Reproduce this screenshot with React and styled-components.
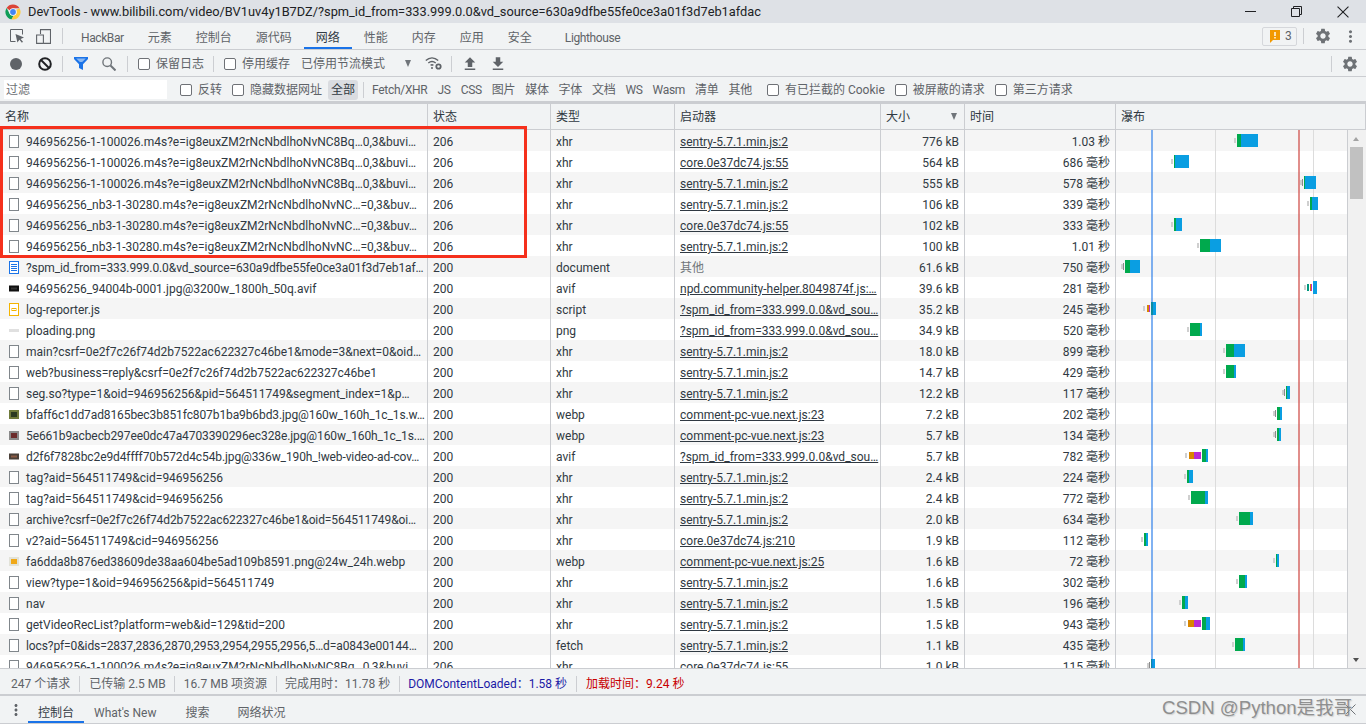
import React from "react";
import styled, { createGlobalStyle } from "styled-components";
import { MdSettings, MdMoreVert, MdFileUpload, MdFileDownload } from "react-icons/md";

const GlobalStyle = createGlobalStyle`
  html, body {
    margin: 0;
    padding: 0;
    background: #fff;
    overflow: hidden;
  }
  * {
    box-sizing: border-box;
  }
  body {
    font-family: Roboto, "Noto Sans CJK SC", sans-serif;
    font-size: 12px;
    line-height: 16px;
    color: #303942;
  }
  svg {
    flex: none;
  }
`;

const COLUMNS = "428px 123px 124px 206px 84px 151px 1fr";
const BORDER = "#cbcdd1";

const Main = styled.div`
  position: relative;
  display: flex;
  flex-direction: column;
  width: 1366px;
  height: 728px;
  overflow: hidden;
`;

const TitleBar = styled.div`
  display: flex;
  align-items: center;
  height: 23px;
  padding-left: 5px;
  background: #dee1e6;
  color: #202124;
  font-size: 12.800px;
  white-space: nowrap;
`;

const TitleText = styled.span`
  margin-left: 7px;
`;

const WindowButtons = styled.div`
  display: flex;
  align-items: center;
  gap: 35px;
  margin-left: auto;
  padding-right: 17px;
  color: #202124;
`;

const Toolbar = styled.div`
  display: flex;
  align-items: center;
  flex: none;
  height: ${p => p.$height || 27}px;
  padding-left: ${p => p.$left || 0}px;
  padding-top: ${p => p.$top || 0}px;
  background: #f1f3f4;
  border-bottom: 1px solid ${BORDER};
  color: #5f6368;
  white-space: nowrap;
`;

const Separator = styled.div`
  flex: none;
  width: 1px;
  height: 16px;
  margin: 0 ${p => p.$right ?? 10}px 0 ${p => p.$left ?? 10}px;
  background: #ccced2;
`;

const Tab = styled.div`
  display: flex;
  align-items: center;
  height: 100%;
  padding: ${p => p.$top ?? 3}px ${p => p.$pad ?? 12}px 0;
  margin-left: ${p => p.$gap || 0}px;
  letter-spacing: ${p => (p.$tight ? "-0.4px" : "0")};
  color: ${p => (p.$active ? "#333b45" : "#5f6368")};
  box-shadow: ${p => (p.$active ? "inset 0 -2px 0 #1a73e8" : "none")};
`;

const IconSlot = styled.span`
  display: flex;
  align-items: center;
  justify-content: center;
  flex: none;
  width: ${p => p.$width}px;
  margin-left: ${p => p.$left || 0}px;
  color: ${p => p.$color || "#5f6368"};
`;

const RightGroup = styled.div`
  display: flex;
  align-items: center;
  margin-left: auto;
`;

const IssueBadge = styled.div`
  display: flex;
  align-items: center;
  gap: 5px;
  width: 35px;
  height: 19px;
  padding-left: 7px;
  border: 1px solid #d5d7db;
  border-radius: 2px;
`;

const CheckLabel = styled.label`
  display: flex;
  align-items: center;
  gap: 6px;
  margin-left: ${p => p.$left || 0}px;
  color: #5f6368;
`;

const CheckBox = styled.input`
  appearance: none;
  flex: none;
  width: 12px;
  height: 12px;
  margin: 0;
  background: #fff;
  border: 1px solid #6e7176;
  border-radius: 2px;
`;

const PlainLabel = styled.span`
  margin-left: ${p => p.$left || 0}px;
`;

const FilterInput = styled.input`
  width: 163px;
  height: 19px;
  margin: 0;
  padding: 0 2px;
  border: none;
  outline: none;
  background: #fff;
  font: inherit;
  &::placeholder {
    color: #6d7074;
    opacity: 1;
  }
`;

const TypeChips = styled.div`
  display: flex;
  align-items: center;
  margin-left: 6px;
`;

const Chip = styled.div`
  display: flex;
  align-items: center;
  height: 20px;
  padding: 0 3px;
  margin-right: ${p => p.$gap ?? 4}px;
  border-radius: 3px;
  letter-spacing: ${p => (p.$active ? "0" : "-0.3px")};
  background: ${p => (p.$active ? "#dadce0" : "transparent")};
  color: ${p => (p.$active ? "#303942" : "#5f6368")};
`;

const HeaderRow = styled.div`
  display: grid;
  grid-template-columns: ${COLUMNS};
  flex: none;
  height: 28px;
  background: #f1f3f4;
  border-top: 2px solid ${BORDER};
  border-bottom: 1px solid ${BORDER};
`;

const HeaderCell = styled.div`
  display: flex;
  align-items: center;
  justify-content: space-between;
  padding: 0 7px 0 5px;
  border-right: 1px solid ${BORDER};
  color: #303942;
`;

const SortArrow = styled.span`
  width: 0;
  height: 0;
  border-left: 3.500px solid transparent;
  border-right: 3.500px solid transparent;
  border-top: 7px solid #70757a;
`;

const Body = styled.div`
  display: flex;
  flex: none;
  height: 539px;
  overflow: hidden;
  border-bottom: 1px solid ${BORDER};
`;

const RowList = styled.div`
  position: relative;
  flex: 1;
  overflow: hidden;
`;

const Row = styled.div`
  display: grid;
  grid-template-columns: ${COLUMNS};
  height: 21px;
  background: ${p => (p.$odd ? "#fff" : "#f5f5f5")};
`;

const Cell = styled.div`
  display: flex;
  align-items: center;
  justify-content: ${p => (p.$right ? "flex-end" : "flex-start")};
  min-width: 0;
  padding: ${p => (p.$right ? "3px 5px 0 0" : "3px 0 0 5px")};
  border-right: 1px solid ${BORDER};
  color: ${p => (p.$muted ? "#70757a" : "#303942")};
  white-space: nowrap;
  overflow: hidden;
`;

const NameCell = styled(Cell)`
  padding-left: 9px;
  svg {
    margin-top: -2px;
  }
`;

const NameText = styled.span`
  margin-left: 7px;
  letter-spacing: ${p => (p.$long ? "-0.1px" : "0")};
`;

const Initiator = styled.span`
  text-decoration: underline;
`;

const WaterfallChart = styled.svg`
  position: absolute;
  top: 0;
  left: 1116px;
  display: block;
`;

const ScrollTrack = styled.div`
  position: relative;
  flex: none;
  width: 18px;
  background: #f1f1f1;
`;

const ScrollThumb = styled.div`
  position: absolute;
  top: 17px;
  left: 2px;
  width: 13px;
  height: 52px;
  background: #c1c1c1;
`;

const ScrollArrow = styled.span`
  position: absolute;
  left: 5px;
  ${p => (p.$up ? "top: 7px" : "bottom: 6px")};
  border-left: 3.500px solid transparent;
  border-right: 3.500px solid transparent;
  ${p => (p.$up ? "border-bottom: 4px solid #a3a3a3" : "border-top: 4px solid #505050")};
`;

const StatusBar = styled.div`
  display: flex;
  align-items: center;
  flex: none;
  height: 27px;
  padding: 5px 0 0 11px;
  background: #f1f3f4;
  border-bottom: 2px solid ${BORDER};
  color: #5f6368;
  white-space: nowrap;
`;

const StatusText = styled.span`
  color: ${p => p.$color || "#5f6368"};
`;

const DrawerBar = styled(Toolbar)`
  height: 28px;
  padding-left: 12px;
`;

const RedFrame = styled.div`
  position: absolute;
  top: 126px;
  left: 0;
  width: 527px;
  height: 132px;
  border: 3px solid #f5301c;
  pointer-events: none;
`;

const Watermark = styled.div`
  position: absolute;
  top: 694px;
  left: 1162px;
  font-family: "Liberation Sans", "Noto Sans CJK SC", sans-serif;
  font-size: 18.600px;
  line-height: 28px;
  color: rgba(120, 120, 120, 0.8);
  text-shadow: 1px 1px 1px rgba(200, 200, 200, 0.8);
  white-space: nowrap;
`;

const ChromeLogo = () => (
  <svg width="16" height="16" viewBox="0 0 16 16">
    <path fill="#db4437" d="M8 .5a7.500 7.500 0 0 1 6.500 3.750H8a3.750 3.750 0 0 0-3.250 1.880L1.600 3.900A7.500 7.500 0 0 1 8 .5z" />
    <path fill="#0f9d58" d="M1.600 3.900l3.150 5.980a3.750 3.750 0 0 0 3.900 1.820L6.600 15.370A7.500 7.500 0 0 1 1.600 3.900z" />
    <path fill="#ffcd40" d="M14.500 4.250A7.500 7.500 0 0 1 6.600 15.370l2.050-3.670a3.750 3.750 0 0 0 2.600-5.600l-.1-.1z" />
    <circle cx="8" cy="8" r="3.600" fill="#fff" />
    <circle cx="8" cy="8" r="2.900" fill="#4285f4" />
  </svg>
);

const MinimizeIcon = () => (
  <svg width="11" height="11" viewBox="0 0 11 11">
    <path d="M0 5.500h11" stroke="currentColor" />
  </svg>
);

const RestoreIcon = () => (
  <svg width="11" height="11" viewBox="0 0 11 11" fill="none" stroke="currentColor">
    <path d="M.5 2.500h8v8h-8z" />
    <path d="M2.500 2.500v-2h8v8h-2" />
  </svg>
);

const CloseIcon = ({ size = 11 }) => (
  <svg width={size} height={size} viewBox="0 0 11 11" stroke="currentColor">
    <path d="M.5.5l10 10M10.500.5l-10 10" />
  </svg>
);

const InspectIcon = () => (
  <svg width="14" height="14" viewBox="0 0 14 14">
    <path fill="none" stroke="#5f6368" d="M5.500 12.500h-5v-12h12v5" />
    <path fill="#5f6368" d="M5.500 5l8.500 3.600-3.400 1.300 2.400 2.800-1.100 1-2.500-2.900L7.400 13.500z" />
  </svg>
);

const DeviceIcon = () => (
  <svg width="15" height="15" viewBox="0 0 15 15" fill="none" stroke="#5f6368" strokeWidth="1.100">
    <path d="M4.500 5V.6h10v13.800H8" />
    <path d="M.6 6h6.800v8.400H.6z" />
  </svg>
);

const RecordIcon = () => (
  <svg width="12" height="12" viewBox="0 0 12 12">
    <circle cx="6" cy="6" r="6" fill="#5f6368" />
  </svg>
);

const ClearIcon = () => (
  <svg width="14" height="14" viewBox="0 0 14 14" fill="none" stroke="#202124" strokeWidth="2">
    <circle cx="7" cy="7" r="5.800" />
    <path d="M3 3l8 8" />
  </svg>
);

const FunnelIcon = () => (
  <svg width="14" height="13" viewBox="0 0 14 13">
    <path fill="#1a73e8" d="M0 0h14v2L9 7.200V13L5 11V7.200L0 2z" />
    <path fill="#8ab8f2" d="M2.200 1.400h9.600L8.200 5H5.800z" />
  </svg>
);

const SearchIcon = () => (
  <svg width="14" height="14" viewBox="0 0 14 14" fill="none" stroke="#70757a" strokeWidth="1.400">
    <circle cx="5.200" cy="5.200" r="4.300" />
    <path strokeWidth="2" d="M8.500 8.500l5 5" />
  </svg>
);

const WifiGearIcon = () => (
  <svg width="17" height="13" viewBox="0 0 17 13" fill="none" stroke="#5f6368" strokeWidth="1.400">
    <path d="M.8 3.500c3.800-3.400 8.600-3.400 12.400 0" />
    <path d="M3.300 6c2.400-2 5-2 7.400 0" />
    <path d="M5.600 8.400c1-.8 1.800-.8 2.800 0" />
    <circle cx="7" cy="11" r="1" fill="#5f6368" stroke="none" />
    <circle cx="13.500" cy="9.500" r="2.200" strokeWidth="1.800" />
  </svg>
);

const FlagIcon = () => (
  <svg width="10" height="13" viewBox="0 0 10 13">
    <path fill="#f29900" d="M0 0h10v10H3l-3 3z" />
    <path fill="#fff" d="M4.300 2h1.400v4H4.300zM4.300 7h1.400v1.400H4.300z" />
  </svg>
);

const FileIcon = () => (
  <svg width="10" height="13" viewBox="0 0 10 13">
    <rect x=".5" y=".5" width="9" height="12" fill="#fff" stroke="#80868b" />
  </svg>
);

const DocIcon = () => (
  <svg width="10" height="13" viewBox="0 0 10 13">
    <rect x=".5" y=".5" width="9" height="12" fill="#fff" stroke="#1a73e8" />
    <path stroke="#1a73e8" d="M2 3.500h6M2 5.500h6M2 7.500h6M2 9.500h6" />
  </svg>
);

const ScriptIcon = () => (
  <svg width="10" height="13" viewBox="0 0 10 13">
    <rect x=".5" y=".5" width="9" height="12" fill="#fff" stroke="#f4b400" />
    <rect x="3" y="5.500" width="4" height="2" fill="none" stroke="#f4b400" />
  </svg>
);

const LineThumb = () => (
  <svg width="10" height="13" viewBox="0 0 10 13">
    <rect y="5" width="10" height="3" fill="#e0e0e0" />
  </svg>
);

const Thumb = ({ colors, height = 9 }) => (
  <svg width="10" height="13" viewBox="0 0 10 13">
    <rect y={(13 - height) / 2} width="10" height={height} fill={colors[0]} />
    <rect x="2" y={(13 - height) / 2 + 2} width="6" height={height - 4} fill={colors[1]} />
  </svg>
);

const rowIcons = {
  file: <FileIcon />,
  doc: <DocIcon />,
  script: <ScriptIcon />,
  line: <LineThumb />,
  black: <Thumb colors={["#111", "#333"]} height={6} />,
  forest: <Thumb colors={["#6f7a3a", "#2b3a20"]} />,
  maroon: <Thumb colors={["#8a8a8a", "#6b2a2a"]} />,
  ad: <Thumb colors={["#4a4038", "#8a5a44"]} height={6} />,
  coin: <Thumb colors={["#e2e2d8", "#f0a818"]} />
};

const M1 = "946956256-1-100026.m4s?e=ig8euxZM2rNcNbdlhoNvNC8Bq…0,3&buvi…";
const M2 = "946956256_nb3-1-30280.m4s?e=ig8euxZM2rNcNbdlhoNvNC…=0,3&buv…";
const SENTRY = "sentry-5.7.1.min.js:2";
const CORE = "core.0e37dc74.js:55";
const SPM = "?spm_id_from=333.999.0.0&vd_sou…";
const COMMENT = "comment-pc-vue.next.js:23";

const requests = [
  ["file", M1, "206", "xhr", SENTRY, "776 kB", "1.03 秒"],
  ["file", M1, "206", "xhr", CORE, "564 kB", "686 毫秒"],
  ["file", M1, "206", "xhr", SENTRY, "555 kB", "578 毫秒"],
  ["file", M2, "206", "xhr", SENTRY, "106 kB", "339 毫秒"],
  ["file", M2, "206", "xhr", CORE, "102 kB", "333 毫秒"],
  ["file", M2, "206", "xhr", SENTRY, "100 kB", "1.01 秒"],
  ["doc", "?spm_id_from=333.999.0.0&vd_source=630a9dfbe55fe0ce3a01f3d7eb1af…", "200", "document", null, "61.6 kB", "750 毫秒"],
  ["black", "946956256_94004b-0001.jpg@3200w_1800h_50q.avif", "200", "avif", "npd.community-helper.8049874f.js:…", "39.6 kB", "281 毫秒"],
  ["script", "log-reporter.js", "200", "script", SPM, "35.2 kB", "245 毫秒"],
  ["line", "ploading.png", "200", "png", SPM, "34.9 kB", "520 毫秒"],
  ["file", "main?csrf=0e2f7c26f74d2b7522ac622327c46be1&mode=3&next=0&oid…", "200", "xhr", SENTRY, "18.0 kB", "899 毫秒"],
  ["file", "web?business=reply&csrf=0e2f7c26f74d2b7522ac622327c46be1", "200", "xhr", SENTRY, "14.7 kB", "429 毫秒"],
  ["file", "seg.so?type=1&oid=946956256&pid=564511749&segment_index=1&p…", "200", "xhr", SENTRY, "12.2 kB", "117 毫秒"],
  ["forest", "bfaff6c1dd7ad8165bec3b851fc807b1ba9b6bd3.jpg@160w_160h_1c_1s.w…", "200", "webp", COMMENT, "7.2 kB", "202 毫秒"],
  ["maroon", "5e661b9acbecb297ee0dc47a4703390296ec328e.jpg@160w_160h_1c_1s.…", "200", "webp", COMMENT, "5.7 kB", "134 毫秒"],
  ["ad", "d2f6f7828bc2e9d4ffff70b572d4c54b.jpg@336w_190h_!web-video-ad-cov…", "200", "avif", SPM, "5.7 kB", "782 毫秒"],
  ["file", "tag?aid=564511749&cid=946956256", "200", "xhr", SENTRY, "2.4 kB", "224 毫秒"],
  ["file", "tag?aid=564511749&cid=946956256", "200", "xhr", SENTRY, "2.4 kB", "772 毫秒"],
  ["file", "archive?csrf=0e2f7c26f74d2b7522ac622327c46be1&oid=564511749&oi…", "200", "xhr", SENTRY, "2.0 kB", "634 毫秒"],
  ["file", "v2?aid=564511749&cid=946956256", "200", "xhr", "core.0e37dc74.js:210", "1.9 kB", "112 毫秒"],
  ["coin", "fa6dda8b876ed38609de38aa604be5ad109b8591.png@24w_24h.webp", "200", "webp", "comment-pc-vue.next.js:25", "1.6 kB", "72 毫秒"],
  ["file", "view?type=1&oid=946956256&pid=564511749", "200", "xhr", SENTRY, "1.6 kB", "302 毫秒"],
  ["file", "nav", "200", "xhr", SENTRY, "1.5 kB", "196 毫秒"],
  ["file", "getVideoRecList?platform=web&id=129&tid=200", "200", "xhr", SENTRY, "1.5 kB", "943 毫秒"],
  ["file", "locs?pf=0&ids=2837,2836,2870,2953,2954,2955,2956,5…d=a0843e00144…", "200", "fetch", SENTRY, "1.1 kB", "435 毫秒"],
  ["file", M1, "206", "xhr", CORE, "1.0 kB", "115 毫秒"]
];

// waterfall segments per row: [kind, from x, to x] in page pixels
const waterfall = [
  [["w", 1234, 1236], ["g", 1237, 1241], ["b", 1241, 1258]],
  [["w", 1171, 1173], ["g", 1174, 1175], ["b", 1175, 1189]],
  [["w", 1300, 1302], ["t", 1302, 1303], ["g", 1304, 1305], ["b", 1305, 1316]],
  [["w", 1307, 1309], ["g", 1310, 1312], ["b", 1312, 1318]],
  [["w", 1171, 1173], ["g", 1174, 1176], ["b", 1176, 1182]],
  [["w", 1197, 1199], ["g", 1200, 1210], ["b", 1210, 1221]],
  [["w", 1121, 1123], ["t", 1123, 1124], ["g", 1125, 1130], ["b", 1130, 1140]],
  [["w", 1304, 1306], ["e", 1307, 1309], ["q", 1310, 1311], ["p", 1311, 1312], ["b", 1313, 1317]],
  [["w", 1143, 1145], ["q", 1147, 1149], ["p", 1149, 1150], ["g", 1151, 1153], ["b", 1153, 1156]],
  [["w", 1187, 1189], ["g", 1190, 1200], ["b", 1200, 1202]],
  [["w", 1223, 1225], ["g", 1226, 1234], ["b", 1234, 1245]],
  [["w", 1223, 1225], ["g", 1226, 1234], ["b", 1234, 1236]],
  [["w", 1282, 1284], ["t", 1284, 1285], ["g", 1286, 1287], ["b", 1287, 1290]],
  [["w", 1273, 1275], ["t", 1275, 1276], ["g", 1277, 1280], ["b", 1280, 1282]],
  [["w", 1273, 1275], ["t", 1275, 1276], ["g", 1277, 1279], ["b", 1279, 1281]],
  [["w", 1185, 1187], ["q", 1189, 1194], ["p", 1194, 1201], ["g", 1202, 1206], ["b", 1206, 1208]],
  [["w", 1184, 1186], ["g", 1187, 1189], ["b", 1189, 1193]],
  [["w", 1188, 1190], ["g", 1191, 1205], ["b", 1205, 1208]],
  [["w", 1236, 1238], ["g", 1239, 1250], ["b", 1250, 1253]],
  [["w", 1141, 1143], ["g", 1144, 1146], ["b", 1146, 1148]],
  [["w", 1273, 1275], ["g", 1276, 1277], ["b", 1277, 1279]],
  [["w", 1236, 1238], ["g", 1239, 1245], ["b", 1245, 1247]],
  [["w", 1179, 1181], ["g", 1182, 1185], ["b", 1185, 1188]],
  [["w", 1184, 1186], ["q", 1188, 1194], ["p", 1194, 1201], ["g", 1202, 1206], ["b", 1206, 1210]],
  [["w", 1232, 1234], ["g", 1235, 1243], ["b", 1243, 1245]],
  [["w", 1147, 1149], ["t", 1149, 1150], ["g", 1151, 1152], ["b", 1152, 1155]]
];

const segmentStyle = {
  w: { fill: "#cfcfcf", top: 4, height: 5 },
  t: { fill: "#8a8a8a", top: 3, height: 7 },
  e: { fill: "#00967d", top: 3, height: 7 },
  q: { fill: "#d98600", top: 3, height: 7 },
  p: { fill: "#b82bd4", top: 3, height: 7 },
  g: { fill: "#00a94d", top: 0, height: 13 },
  b: { fill: "#0a9ee2", top: 0, height: 13 }
};

const Chart = () => (
  <WaterfallChart width="232" height="539" viewBox="1116 130 232 539">
    <path stroke="#dcdcdc" d="M1215.500 130v539M1313.500 130v539" />
    {waterfall.map((segments, row) =>
      segments.map(([kind, from, to]) => (
        <rect
          key={row + kind + from}
          x={from}
          y={134 + 21 * row + segmentStyle[kind].top}
          width={to - from}
          height={segmentStyle[kind].height}
          fill={segmentStyle[kind].fill}
        />
      ))
    )}
    <rect x="1151" y="130" width="2" height="539" fill="#1a73e8" opacity="0.55" />
    <rect x="1298" y="130" width="2" height="539" fill="#c8312b" opacity="0.55" />
  </WaterfallChart>
);

const typeChips = ["Fetch/XHR", "JS", "CSS", "图片", "媒体", "字体", "文档", "WS", "Wasm", "清单", "其他"];

const App = () => (
  <Main>
    <GlobalStyle />
    <TitleBar>
      <ChromeLogo />
      <TitleText>DevTools - www.bilibili.com/video/BV1uv4y1B7DZ/?spm_id_from=333.999.0.0&vd_source=630a9dfbe55fe0ce3a01f3d7eb1afdac</TitleText>
      <WindowButtons>
        <MinimizeIcon />
        <RestoreIcon />
        <CloseIcon size={12} />
      </WindowButtons>
    </TitleBar>

    <Toolbar $left={10}>
      <IconSlot $width={14}><InspectIcon /></IconSlot>
      <IconSlot $width={15} $left={12}><DeviceIcon /></IconSlot>
      <Separator $left={11} $right={6} />
      <Tab $tight>HackBar</Tab>
      <Tab>元素</Tab>
      <Tab>控制台</Tab>
      <Tab>源代码</Tab>
      <Tab $active>网络</Tab>
      <Tab>性能</Tab>
      <Tab>内存</Tab>
      <Tab>应用</Tab>
      <Tab>安全</Tab>
      <Tab $gap={9} $tight>Lighthouse</Tab>
      <RightGroup>
        <IssueBadge><FlagIcon />3</IssueBadge>
        <Separator $left={6} $right={10} />
        <IconSlot $width={17} $color="#6e7276"><MdSettings size={18} /></IconSlot>
        <IconSlot $width={18} $left={10} $color="#6e7276"><MdMoreVert size={19} /></IconSlot>
        <IconSlot $width={7} />
      </RightGroup>
    </Toolbar>

    <Toolbar $left={10} $top={1}>
      <IconSlot $width={12}><RecordIcon /></IconSlot>
      <IconSlot $width={14} $left={16}><ClearIcon /></IconSlot>
      <Separator $right={11} />
      <IconSlot $width={14}><FunnelIcon /></IconSlot>
      <IconSlot $width={14} $left={14}><SearchIcon /></IconSlot>
      <Separator $left={11} />
      <CheckLabel><CheckBox type="checkbox" />保留日志</CheckLabel>
      <Separator $left={9} />
      <CheckLabel><CheckBox type="checkbox" />停用缓存</CheckLabel>
      <PlainLabel $left={11}>已停用节流模式</PlainLabel>
      <IconSlot $width={7} $left={19}><SortArrow /></IconSlot>
      <IconSlot $width={17} $left={14}><WifiGearIcon /></IconSlot>
      <Separator $left={9} $right={11} />
      <IconSlot $width={14}><MdFileUpload size={18} /></IconSlot>
      <IconSlot $width={14} $left={14}><MdFileDownload size={18} /></IconSlot>
      <RightGroup>
        <Separator $left={0} $right={9} />
        <IconSlot $width={17} $color="#6e7276"><MdSettings size={18} /></IconSlot>
        <IconSlot $width={8} />
      </RightGroup>
    </Toolbar>

    <Toolbar $left={4} $height={25} $top={1}>
      <FilterInput placeholder="过滤" />
      <CheckLabel $left={13}><CheckBox type="checkbox" />反转</CheckLabel>
      <CheckLabel $left={10}><CheckBox type="checkbox" />隐藏数据网址</CheckLabel>
      <TypeChips>
        <Chip $active $gap={0}>全部</Chip>
        <Separator $left={5} $right={5} />
        {typeChips.map(name => <Chip key={name}>{name}</Chip>)}
      </TypeChips>
      <CheckLabel $left={8}><CheckBox type="checkbox" />有已拦截的 Cookie</CheckLabel>
      <CheckLabel $left={10}><CheckBox type="checkbox" />被屏蔽的请求</CheckLabel>
      <CheckLabel $left={10}><CheckBox type="checkbox" />第三方请求</CheckLabel>
    </Toolbar>

    <HeaderRow>
      <HeaderCell>名称</HeaderCell>
      <HeaderCell>状态</HeaderCell>
      <HeaderCell>类型</HeaderCell>
      <HeaderCell>启动器</HeaderCell>
      <HeaderCell>大小<SortArrow /></HeaderCell>
      <HeaderCell>时间</HeaderCell>
      <HeaderCell>瀑布</HeaderCell>
    </HeaderRow>

    <Body>
      <RowList>
        {requests.map(([icon, name, status, type, initiator, size, time], i) => (
          <Row key={i} $odd={i % 2 === 1}>
            <NameCell>
              {rowIcons[icon]}
              <NameText $long={name.length >= 62}>{name}</NameText>
            </NameCell>
            <Cell>{status}</Cell>
            <Cell>{type}</Cell>
            <Cell $muted={!initiator}>
              {initiator ? <Initiator>{initiator}</Initiator> : "其他"}
            </Cell>
            <Cell $right>{size}</Cell>
            <Cell $right>{time}</Cell>
            <Cell />
          </Row>
        ))}
        <Chart />
      </RowList>
      <ScrollTrack>
        <ScrollArrow $up />
        <ScrollThumb />
        <ScrollArrow />
      </ScrollTrack>
    </Body>

    <StatusBar>
      <StatusText>247 个请求</StatusText>
      <Separator $left={9} $right={9} />
      <StatusText>已传输 2.5 MB</StatusText>
      <Separator $left={8} $right={9} />
      <StatusText>16.7 MB 项资源</StatusText>
      <Separator $left={9} $right={8} />
      <StatusText>完成用时：11.78 秒</StatusText>
      <Separator $left={9} $right={8} />
      <StatusText $color="#1a1aa6">DOMContentLoaded：1.58 秒</StatusText>
      <Separator $left={9} $right={9} />
      <StatusText $color="#c80000">加载时间：9.24 秒</StatusText>
    </StatusBar>

    <DrawerBar>
      <IconSlot $width={8}><MdMoreVert size={18} /></IconSlot>
      <Tab $active $pad={10} $gap={8} $top={6}>控制台</Tab>
      <Tab $pad={10} $top={6}>What's New</Tab>
      <Tab $pad={10} $gap={9} $top={6}>搜索</Tab>
      <Tab $pad={10} $gap={8} $top={6}>网络状况</Tab>
      <RightGroup>
        <IconSlot $width={12} $color="#6e7276"><CloseIcon /></IconSlot>
        <IconSlot $width={10} />
      </RightGroup>
    </DrawerBar>

    <RedFrame />
    <Watermark>CSDN @Python是我哥</Watermark>
  </Main>
);

export default App;
